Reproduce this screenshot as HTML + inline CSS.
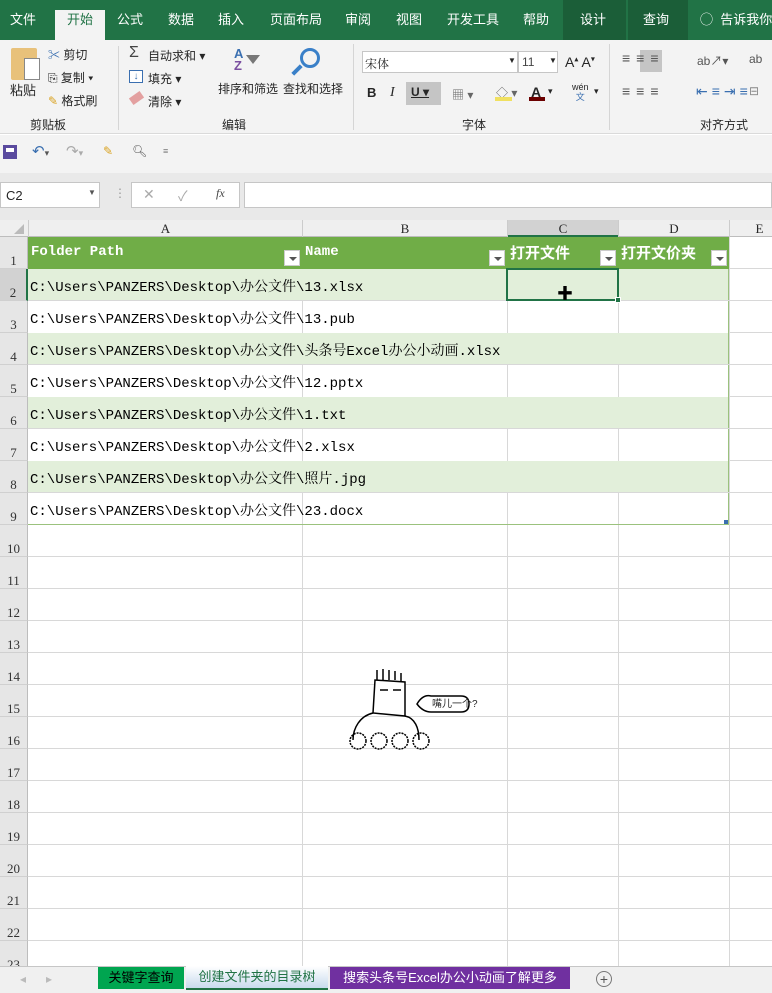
<!DOCTYPE html>
<html><head><meta charset="utf-8"><style>
*{margin:0;padding:0;box-sizing:border-box}
body{width:772px;height:993px;overflow:hidden;background:#fff;font-family:"Liberation Sans","Noto Sans CJK SC",sans-serif;position:relative;font-size:12px;color:#262626}
.a{position:absolute;white-space:nowrap}
.tab{position:absolute;top:0;height:40px;line-height:46px;color:#fff;font-size:13px;text-align:center}
.cell{font-family:"Liberation Mono","Noto Serif CJK SC",monospace;font-size:14px;color:#000}
.rh{position:absolute;left:0;width:28px;background:#e6e6e6;border-right:1px solid #bdbdbd;border-bottom:1px solid #d0d0d0;font-family:"Liberation Serif",serif;font-size:13px;color:#333;text-align:center}
.gl{position:absolute;background:#d8d8d8}
.dd{position:absolute;width:16px;height:16px;background:#fff;border:1px solid #ccc}
.dd:after{content:"";position:absolute;left:4px;top:6px;border:4px solid transparent;border-top:4px solid #555}
.hd{color:#fff;font-weight:bold}
</style></head><body>
<div class="a" style="left:0;top:0;width:772px;height:40px;background:#217346"></div>
<div class="a" style="left:563px;top:0;width:63px;height:40px;background:#1b5e38"></div>
<div class="a" style="left:628px;top:0;width:60px;height:40px;background:#1b5e38"></div>
<div class="a" style="left:55px;top:10px;width:50px;height:30px;background:#f3f3f3"></div>
<div class="tab" style="left:0;width:46px;top:-3px">文件</div>
<div class="tab" style="left:55px;width:50px;top:-3px;color:#217346">开始</div>
<div class="tab" style="left:112px;width:36px;top:-3px">公式</div>
<div class="tab" style="left:163px;width:36px;top:-3px">数据</div>
<div class="tab" style="left:213px;width:36px;top:-3px">插入</div>
<div class="tab" style="left:266px;width:60px;top:-3px">页面布局</div>
<div class="tab" style="left:340px;width:36px;top:-3px">审阅</div>
<div class="tab" style="left:391px;width:36px;top:-3px">视图</div>
<div class="tab" style="left:445px;width:56px;top:-3px">开发工具</div>
<div class="tab" style="left:518px;width:36px;top:-3px">帮助</div>
<div class="tab" style="left:575px;width:36px;top:-3px">设计</div>
<div class="tab" style="left:638px;width:36px;top:-3px">查询</div>
<div class="tab" style="left:700px;width:80px;top:-3px;text-align:left">◯&nbsp; 告诉我你</div>
<div class="a" style="left:0;top:40px;width:772px;height:94px;background:#f3f3f3;border-bottom:1px solid #dadada"></div>
<div class="a" style="left:11px;top:48px;width:26px;height:32px;background:#e8c17a;border-radius:2px"></div>
<div class="a" style="left:24px;top:58px;width:16px;height:22px;background:#fff;border:1px solid #888"></div>
<div class="a" style="left:10px;top:80px;font-size:13px">粘贴</div>
<div class="a" style="left:48px;top:46px;font-size:12px;color:#3a6fb0">✂ <span style="color:#262626">剪切</span></div>
<div class="a" style="left:48px;top:69px;font-size:12px">⎘ 复制 ▾</div>
<div class="a" style="left:48px;top:92px;font-size:12px"><span style="color:#d9a220">✎</span> 格式刷</div>
<div class="a" style="left:30px;top:116px;font-size:12px">剪贴板</div>
<div class="a" style="left:118px;top:46px;width:1px;height:84px;background:#d5d5d5"></div>
<div class="a" style="left:129px;top:44px;font-size:16px;color:#444">Σ</div>
<div class="a" style="left:148px;top:47px">自动求和 ▾</div>
<div class="a" style="left:129px;top:70px;width:14px;height:13px;border:1px solid #3a6fb0;background:#fff;color:#3a6fb0;font-size:10px;line-height:11px;text-align:center">↓</div>
<div class="a" style="left:148px;top:70px">填充 ▾</div>
<div class="a" style="left:130px;top:94px;width:13px;height:8px;background:#e3a0a0;transform:rotate(-35deg)"></div>
<div class="a" style="left:148px;top:93px">清除 ▾</div>
<div class="a" style="left:234px;top:48px;font-size:13px;font-weight:bold;color:#3a6fb0;line-height:12px">A<br><span style="color:#7a4fa0">Z</span></div>
<div class="a" style="left:246px;top:55px;border:7px solid transparent;border-top:9px solid #777"></div>
<div class="a" style="left:218px;top:80px">排序和筛选</div>
<div class="a" style="left:300px;top:48px;width:20px;height:20px;border:3px solid #3a80c8;border-radius:50%"></div>
<div class="a" style="left:291px;top:68px;width:12px;height:4px;background:#3a80c8;transform:rotate(-45deg)"></div>
<div class="a" style="left:283px;top:80px">查找和选择</div>
<div class="a" style="left:222px;top:116px">编辑</div>
<div class="a" style="left:353px;top:44px;width:1px;height:86px;background:#d5d5d5"></div>
<div class="a" style="left:362px;top:51px;width:156px;height:22px;background:#fff;border:1px solid #c6c6c6"></div>
<div class="a" style="left:365px;top:55px;font-family:'Noto Serif CJK SC',serif">宋体</div>
<div class="a" style="left:508px;top:56px;font-size:8px">▼</div>
<div class="a" style="left:518px;top:51px;width:40px;height:22px;background:#fff;border:1px solid #c6c6c6"></div>
<div class="a" style="left:522px;top:55px;color:#444">11</div>
<div class="a" style="left:549px;top:56px;font-size:8px">▼</div>
<div class="a" style="left:565px;top:54px;font-size:14px">A<sup style="font-size:8px">▴</sup> A<sup style="font-size:8px">▾</sup></div>
<div class="a" style="left:367px;top:85px;font-weight:bold;font-size:13px">B</div>
<div class="a" style="left:390px;top:85px;font-style:italic;font-family:'Liberation Serif';font-size:14px">I</div>
<div class="a" style="left:406px;top:82px;width:35px;height:23px;background:#c5c5c5"></div>
<div class="a" style="left:411px;top:85px;text-decoration:underline;font-weight:bold">U ▾</div>
<div class="a" style="left:452px;top:86px;color:#666">▦ ▾</div>
<div class="a" style="left:496px;top:84px;color:#666">◇ ▾</div>
<div class="a" style="left:495px;top:97px;width:17px;height:4px;background:#f0e060"></div>
<div class="a" style="left:531px;top:84px;font-size:14px;font-weight:bold">A</div>
<div class="a" style="left:529px;top:97px;width:16px;height:4px;background:#6b0000"></div>
<div class="a" style="left:548px;top:86px;font-size:9px">▾</div>
<div class="a" style="left:572px;top:82px;font-size:9px;line-height:10px;text-align:center">wén<br><span style="color:#3a6fb0">文</span></div>
<div class="a" style="left:594px;top:86px;font-size:9px">▾</div>
<div class="a" style="left:462px;top:116px">字体</div>
<div class="a" style="left:609px;top:44px;width:1px;height:86px;background:#d5d5d5"></div>
<div class="a" style="left:640px;top:50px;width:22px;height:22px;background:#c5c5c5"></div>
<div class="a" style="left:622px;top:50px;font-size:14px;color:#555;letter-spacing:6px">≡≡≡</div>
<div class="a" style="left:697px;top:52px;color:#555">ab↗▾</div>
<div class="a" style="left:622px;top:83px;font-size:14px;color:#555;letter-spacing:6px">≡≡≡</div>
<div class="a" style="left:696px;top:83px;font-size:14px;color:#3a6fb0;letter-spacing:4px">⇤≡⇥≡</div>
<div class="a" style="left:749px;top:52px;color:#555">ab</div>
<div class="a" style="left:749px;top:84px;color:#888">⊟</div>
<div class="a" style="left:700px;top:116px">对齐方式</div>
<div class="a" style="left:0;top:135px;width:772px;height:38px;background:#f3f3f3"></div>
<div class="a" style="left:3px;top:145px;width:14px;height:14px;background:#5a4a9e;border:2px solid #5a4a9e"><div style="margin:1px;height:4px;background:#fff"></div></div>
<div class="a" style="left:32px;top:142px;font-size:15px;color:#3a6fb0">↶<span style="font-size:9px;color:#555">▾</span></div>
<div class="a" style="left:66px;top:142px;font-size:15px;color:#aaa">↷<span style="font-size:9px">▾</span></div>
<div class="a" style="left:103px;top:144px;color:#d9a220">✎</div>
<div class="a" style="left:132px;top:144px;color:#555">🔍︎</div>
<div class="a" style="left:163px;top:146px;font-size:9px;color:#777">≡</div>
<div class="a" style="left:0;top:173px;width:772px;height:47px;background:#e9e9e9"></div>
<div class="a" style="left:0;top:182px;width:100px;height:26px;background:#fff;border:1px solid #c6c6c6;padding:5px 5px;font-size:13px">C2</div>
<div class="a" style="left:88px;top:188px;font-size:8px;color:#555">▼</div>
<div class="a" style="left:114px;top:186px;color:#999">⋮</div>
<div class="a" style="left:131px;top:182px;width:109px;height:26px;background:#fff;border:1px solid #c6c6c6"></div>
<div class="a" style="left:143px;top:186px;color:#aaa;font-size:14px">✕</div>
<div class="a" style="left:178px;top:186px;color:#aaa;font-size:14px">✓</div>
<div class="a" style="left:216px;top:186px;font-style:italic;font-family:'Liberation Serif';color:#444">fx</div>
<div class="a" style="left:244px;top:182px;width:528px;height:26px;background:#fff;border:1px solid #c6c6c6"></div>
<div class="a" style="left:0;top:220px;width:772px;height:17px;background:#efefef;border-bottom:1px solid #bdbdbd"></div>
<div class="a" style="left:507px;top:220px;width:111px;height:17px;background:#d2d2d2;border-bottom:2px solid #217346"></div>
<div class="a" style="left:14px;top:224px;border:5px solid transparent;border-right:5px solid #bbb;border-bottom:5px solid #bbb"></div>
<div class="a" style="left:28px;top:220px;width:274px;height:17px;border-left:1px solid #ccc;text-align:center;font-family:'Liberation Serif';font-size:13px;line-height:18px">A</div>
<div class="a" style="left:302px;top:220px;width:205px;height:17px;border-left:1px solid #ccc;text-align:center;font-family:'Liberation Serif';font-size:13px;line-height:18px">B</div>
<div class="a" style="left:507px;top:220px;width:111px;height:17px;border-left:1px solid #ccc;text-align:center;font-family:'Liberation Serif';font-size:13px;line-height:18px">C</div>
<div class="a" style="left:618px;top:220px;width:111px;height:17px;border-left:1px solid #ccc;text-align:center;font-family:'Liberation Serif';font-size:13px;line-height:18px">D</div>
<div class="a" style="left:729px;top:220px;width:60px;height:17px;border-left:1px solid #ccc;text-align:center;font-family:'Liberation Serif';font-size:13px;line-height:18px">E</div>
<div class="gl" style="left:302px;top:237px;width:1px;height:730px"></div>
<div class="gl" style="left:507px;top:237px;width:1px;height:730px"></div>
<div class="gl" style="left:618px;top:237px;width:1px;height:730px"></div>
<div class="gl" style="left:729px;top:237px;width:1px;height:730px"></div>
<div class="a" style="left:28px;top:237px;width:701px;height:32px;background:#70ad47"></div>
<div class="a" style="left:28px;top:269px;width:701px;height:32px;background:#e2efda"></div>
<div class="a" style="left:28px;top:333px;width:701px;height:32px;background:#e2efda"></div>
<div class="a" style="left:28px;top:397px;width:701px;height:32px;background:#e2efda"></div>
<div class="a" style="left:28px;top:461px;width:701px;height:32px;background:#e2efda"></div>
<div class="a" style="left:728px;top:269px;width:1px;height:256px;background:#9bc27d"></div>
<div class="a" style="left:28px;top:524px;width:701px;height:1px;background:#9bc27d"></div>
<div class="a" style="left:724px;top:520px;width:4px;height:4px;background:#3a6fb0"></div>
<div class="rh" style="top:237px;height:32px;line-height:48px">1</div>
<div class="rh" style="top:269px;height:32px;line-height:48px;background:#d2d2d2;border-right:2px solid #217346">2</div>
<div class="rh" style="top:301px;height:32px;line-height:48px">3</div>
<div class="rh" style="top:333px;height:32px;line-height:48px">4</div>
<div class="rh" style="top:365px;height:32px;line-height:48px">5</div>
<div class="rh" style="top:397px;height:32px;line-height:48px">6</div>
<div class="rh" style="top:429px;height:32px;line-height:48px">7</div>
<div class="rh" style="top:461px;height:32px;line-height:48px">8</div>
<div class="rh" style="top:493px;height:32px;line-height:48px">9</div>
<div class="rh" style="top:525px;height:32px;line-height:48px">10</div>
<div class="rh" style="top:557px;height:32px;line-height:48px">11</div>
<div class="rh" style="top:589px;height:32px;line-height:48px">12</div>
<div class="rh" style="top:621px;height:32px;line-height:48px">13</div>
<div class="rh" style="top:653px;height:32px;line-height:48px">14</div>
<div class="rh" style="top:685px;height:32px;line-height:48px">15</div>
<div class="rh" style="top:717px;height:32px;line-height:48px">16</div>
<div class="rh" style="top:749px;height:32px;line-height:48px">17</div>
<div class="rh" style="top:781px;height:32px;line-height:48px">18</div>
<div class="rh" style="top:813px;height:32px;line-height:48px">19</div>
<div class="rh" style="top:845px;height:32px;line-height:48px">20</div>
<div class="rh" style="top:877px;height:32px;line-height:48px">21</div>
<div class="rh" style="top:909px;height:32px;line-height:48px">22</div>
<div class="rh" style="top:941px;height:32px;line-height:48px">23</div>
<div class="gl" style="left:28px;top:300px;width:744px;height:1px"></div>
<div class="gl" style="left:729px;top:268px;width:43px;height:1px"></div>
<div class="gl" style="left:729px;top:332px;width:43px;height:1px"></div>
<div class="gl" style="left:28px;top:364px;width:744px;height:1px"></div>
<div class="gl" style="left:729px;top:396px;width:43px;height:1px"></div>
<div class="gl" style="left:28px;top:428px;width:744px;height:1px"></div>
<div class="gl" style="left:729px;top:460px;width:43px;height:1px"></div>
<div class="gl" style="left:28px;top:492px;width:744px;height:1px"></div>
<div class="gl" style="left:729px;top:524px;width:43px;height:1px"></div>
<div class="gl" style="left:28px;top:556px;width:744px;height:1px"></div>
<div class="gl" style="left:28px;top:588px;width:744px;height:1px"></div>
<div class="gl" style="left:28px;top:620px;width:744px;height:1px"></div>
<div class="gl" style="left:28px;top:652px;width:744px;height:1px"></div>
<div class="gl" style="left:28px;top:684px;width:744px;height:1px"></div>
<div class="gl" style="left:28px;top:716px;width:744px;height:1px"></div>
<div class="gl" style="left:28px;top:748px;width:744px;height:1px"></div>
<div class="gl" style="left:28px;top:780px;width:744px;height:1px"></div>
<div class="gl" style="left:28px;top:812px;width:744px;height:1px"></div>
<div class="gl" style="left:28px;top:844px;width:744px;height:1px"></div>
<div class="gl" style="left:28px;top:876px;width:744px;height:1px"></div>
<div class="gl" style="left:28px;top:908px;width:744px;height:1px"></div>
<div class="gl" style="left:28px;top:940px;width:744px;height:1px"></div>
<div class="a cell hd" style="left:31px;top:244px">Folder Path</div>
<div class="dd" style="left:284px;top:250px"></div>
<div class="a cell hd" style="left:305px;top:244px">Name</div>
<div class="dd" style="left:489px;top:250px"></div>
<div class="a hd" style="left:510px;top:242px;font-size:15px;font-family:'Noto Sans CJK SC',sans-serif">打开文件</div>
<div class="dd" style="left:600px;top:250px"></div>
<div class="a hd" style="left:621px;top:242px;font-size:15px;font-family:'Noto Sans CJK SC',sans-serif">打开文价夹</div>
<div class="dd" style="left:711px;top:250px"></div>
<div class="a cell" style="left:30px;top:276px">C:\Users\PANZERS\Desktop\办公文件\13.xlsx</div>
<div class="a cell" style="left:30px;top:308px">C:\Users\PANZERS\Desktop\办公文件\13.pub</div>
<div class="a cell" style="left:30px;top:340px">C:\Users\PANZERS\Desktop\办公文件\头条号Excel办公小动画.xlsx</div>
<div class="a cell" style="left:30px;top:372px">C:\Users\PANZERS\Desktop\办公文件\12.pptx</div>
<div class="a cell" style="left:30px;top:404px">C:\Users\PANZERS\Desktop\办公文件\1.txt</div>
<div class="a cell" style="left:30px;top:436px">C:\Users\PANZERS\Desktop\办公文件\2.xlsx</div>
<div class="a cell" style="left:30px;top:468px">C:\Users\PANZERS\Desktop\办公文件\照片.jpg</div>
<div class="a cell" style="left:30px;top:500px">C:\Users\PANZERS\Desktop\办公文件\23.docx</div>
<div class="a" style="left:506px;top:268px;width:113px;height:33px;border:2px solid #217346"></div>
<div class="a" style="left:615px;top:297px;width:6px;height:6px;background:#217346;border:1px solid #fff"></div>
<div class="a" style="left:557px;top:280px;font-size:16px;font-weight:bold;color:#000">✚</div>
<svg class="a" style="left:345px;top:668px" width="135" height="84" viewBox="0 0 135 84" fill="none" stroke="#000" stroke-width="1.5">
<path d="M30 12 L28 45 L60 48 L60 14 Z" fill="#fff"/>
<path d="M32 12 V2 M38 12 V1 M44 12 V2 M50 12 V3 M56 14 V5"/>
<path d="M35 22 h8 M48 22 h8"/>
<path d="M28 45 C15 48 8 60 8 72 M60 48 C70 50 74 60 74 72"/>
<path d="M72 36 q6 -10 14 -8 h30 q8 0 8 8 q0 8 -8 8 h-30 q-8 0 -14 -8z"/>
<circle cx="13" cy="73" r="8" stroke-dasharray="2 1"/><circle cx="34" cy="73" r="8" stroke-dasharray="2 1"/><circle cx="55" cy="73" r="8" stroke-dasharray="2 1"/><circle cx="76" cy="73" r="8" stroke-dasharray="2 1"/>
</svg>
<div class="a" style="left:432px;top:695px;font-size:10px">嘴儿一个?</div>
<div class="a" style="left:0;top:966px;width:772px;height:27px;background:#f0f0f0;border-top:1px solid #c6c6c6"></div>
<div class="a" style="left:20px;top:972px;color:#bbb">◂ &nbsp;&nbsp;&nbsp;&nbsp; ▸</div>
<div class="a" style="left:98px;top:967px;width:86px;height:22px;background:#00a550;color:#000;font-size:13px;text-align:center;line-height:22px">关键字查询</div>
<div class="a" style="left:186px;top:966px;width:142px;height:24px;background:linear-gradient(#fff,#c9dbee);border-bottom:2px solid #217346;color:#217346;font-size:13px;text-align:center;line-height:22px">创建文件夹的目录树</div>
<div class="a" style="left:330px;top:967px;width:240px;height:22px;background:#7030a0;color:#fff;font-size:13px;text-align:center;line-height:22px">搜索头条号Excel办公小动画了解更多</div>
<div class="a" style="left:596px;top:971px;width:16px;height:16px;border:1px solid #777;border-radius:50%;text-align:center;line-height:14px;color:#555;font-size:14px">+</div>
</body></html>
